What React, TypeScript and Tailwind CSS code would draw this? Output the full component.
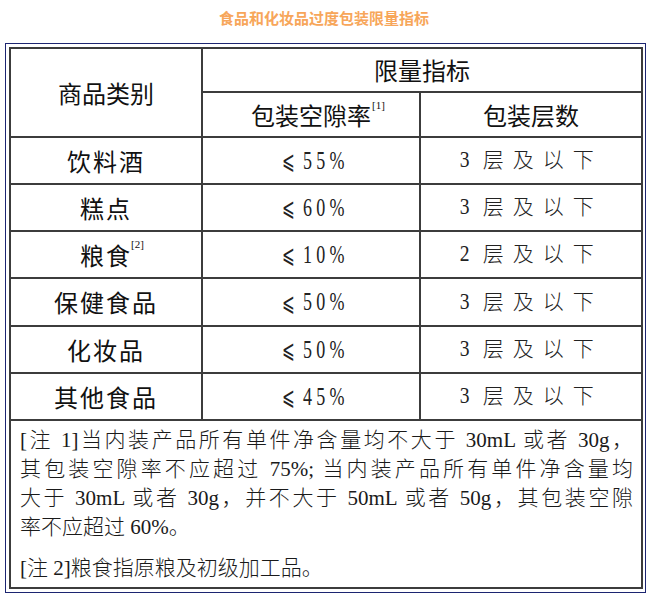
const sans = "font-['Noto_Sans_CJK_SC','Noto_Sans',sans-serif]";
const serif = "font-['Liberation_Serif','DejaVu_Serif','Noto_Sans_CJK_SC',serif]";

type Row = { name: string; sup?: string; ratio: string; layers: string; h: string };

const rows: Row[] = [
  { name: "饮料酒", ratio: "55%", layers: "3", h: "h-[47px]" },
  { name: "糕点", ratio: "60%", layers: "3", h: "h-[47px]" },
  { name: "粮食", sup: "[2]", ratio: "10%", layers: "2", h: "h-[47px]" },
  { name: "保健食品", ratio: "50%", layers: "3", h: "h-[48px]" },
  { name: "化妆品", ratio: "50%", layers: "3", h: "h-[47px]" },
  { name: "其他食品", ratio: "45%", layers: "3", h: "h-[47px]" },
];

const cell = "border-2 border-[#3c3c3c] text-center align-middle p-0";

function Note({ lines, last }: { lines: string[]; last?: boolean }) {
  return (
    <div className={last ? "mt-[12px]" : ""}>
      {lines.map((l, i) => (
        <div
          key={i}
          className={`h-[29px] leading-[29px] whitespace-nowrap ${
            i < lines.length - 1 ? "[text-align-last:justify] text-justify" : "text-left"
          }`}
        >
          {l}
        </div>
      ))}
    </div>
  );
}

export default function App() {
  return (
    <div className="w-[648px] h-[600px] bg-white text-[#111]">
      <h1 className={`${sans} pt-[8px] text-center text-[15px] leading-[20px] font-bold text-[#f7a65a]`}>
        食品和化妆品过度包装限量指标
      </h1>
      <div className="mt-[15px] ml-[5px] w-[641px] border-[1.5px] border-[#1c2571] px-[3px] py-[3px]">
        <table className="table-fixed border-collapse w-[632px]">
          <colgroup>
            <col className="w-[192px]" />
            <col className="w-[218px]" />
            <col className="w-[222px]" />
          </colgroup>
          <tbody>
            <tr className="h-[44px]">
              <td rowSpan={2} className={`${cell} ${sans} text-[24px]`}>
                商品类别
              </td>
              <td colSpan={2} className={`${cell} ${sans} text-[24px]`}>
                限量指标
              </td>
            </tr>
            <tr className="h-[45px]">
              <td className={`${cell} ${sans} text-[24px]`}>
                <span className="relative">
                  包装空隙率
                  <span className={`${serif} absolute top-[3px] left-full ml-[1px] text-[11px] leading-none`}>[1]</span>
                </span>
              </td>
              <td className={`${cell} ${sans} text-[24px]`}>包装层数</td>
            </tr>
            {rows.map((r) => (
              <tr key={r.name} className={r.h}>
                <td className={`${cell} ${sans} text-[24px] tracking-[2px]`}>
                  <span className="relative">
                    {r.name}
                    {r.sup && (
                      <span className={`${serif} absolute top-[2px] left-full -ml-[1px] text-[11px] leading-none tracking-normal`}>
                        {r.sup}
                      </span>
                    )}
                  </span>
                </td>
                <td className={`${cell} text-[#222]`}>
                  <span className="inline-flex items-center justify-center gap-[6px] pl-[6px]">
                    <span className="font-['DejaVu_Sans',sans-serif] font-extralight text-[22px] inline-block scale-x-[0.7] scale-y-[1.15]">
                      ⩽
                    </span>
                    <span className={`${serif} text-[25px] tracking-[6px] inline-block scale-x-[0.72] -mx-[9px]`}>{r.ratio}</span>
                  </span>
                </td>
                <td className={`${cell} text-[#222]`}>
                  <span className={`${serif} text-[23px] inline-block scale-x-[0.85] mr-[12px]`}>{r.layers}</span>
                  <span className={`${sans} text-[21px] font-light tracking-[9px]`}>层及以下</span>
                </td>
              </tr>
            ))}
            <tr className="h-[168px]">
              <td colSpan={3} className="border-2 border-[#3c3c3c] align-top pt-[5px] pl-[9px] pr-[8px] pb-0">
                <div className={`${serif} text-[21px] font-light text-[#1a1a1a]`}>
                  <Note
                    lines={[
                      "[注 1]当内装产品所有单件净含量均不大于 30mL 或者 30g，",
                      "其包装空隙率不应超过 75%; 当内装产品所有单件净含量均",
                      "大于 30mL 或者 30g，并不大于 50mL 或者 50g，其包装空隙",
                      "率不应超过 60%。",
                    ]}
                  />
                  <Note last lines={["[注 2]粮食指原粮及初级加工品。"]} />
                </div>
              </td>
            </tr>
          </tbody>
        </table>
      </div>
    </div>
  );
}
